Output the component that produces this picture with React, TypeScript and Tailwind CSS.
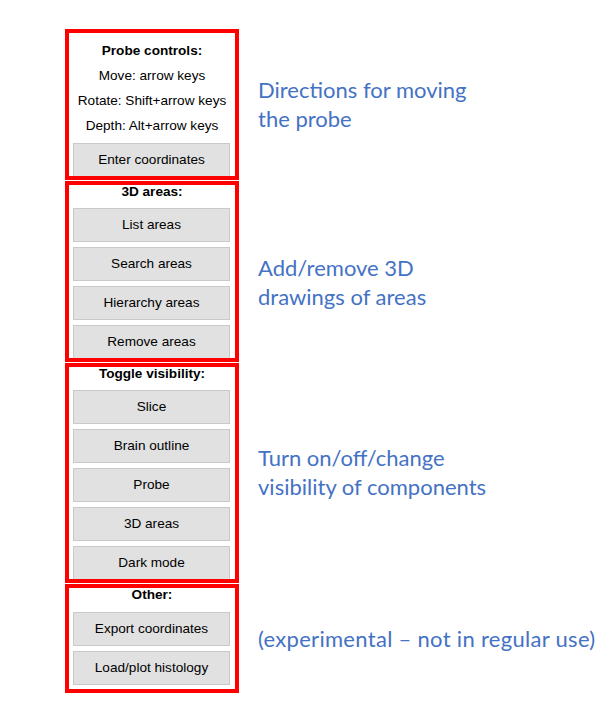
const Btn = ({ label }: { label: string }) => (
    <div className="ml-[4px] w-[157px] h-[34px] shrink-0 flex items-center justify-center bg-[#e1e1e1] border border-[#c9c9c9] text-[13.6px] text-black">
        {label}
    </div>
);

const Heading = ({ text }: { text: string }) => (
    <div className="h-[14px] leading-[14px] text-center font-bold text-[13.6px] text-black">{text}</div>
);

const Note = ({ lines, className = "" }: { lines: string[]; className?: string }) => (
    <div className={`font-['Lato',sans-serif] text-[22px] leading-[29px] text-[#4472c4] ${className}`}>
        {lines.map((l) => (
            <div key={l} className="whitespace-nowrap">{l}</div>
        ))}
    </div>
);

export default function App() {
    return (
        <div className="w-[605px] h-[720px] bg-white font-['Liberation_Sans',Arial,sans-serif] pt-[29px] pl-[65px]">
            <div className="flex flex-col gap-[1px]">
                {/* probe controls */}
                <div className="flex items-center gap-[19px]">
                    <div className="w-[174px] h-[151px] shrink-0 border-4 border-[#ff0000] overflow-hidden flex flex-col">
                        <div className="pt-[5px] text-center text-[13.6px] text-black">
                            <div className="h-[25px] leading-[25px] font-bold">Probe controls:</div>
                            <div className="h-[25px] leading-[25px]">Move: arrow keys</div>
                            <div className="h-[25px] leading-[25px]">Rotate: Shift+arrow keys</div>
                            <div className="h-[25px] leading-[25px]">Depth: Alt+arrow keys</div>
                        </div>
                        <div className="mt-[5px]">
                            <Btn label="Enter coordinates" />
                        </div>
                    </div>
                    <Note lines={["Directions for moving", "the probe"]} className="-mt-[2px]" />
                </div>

                {/* 3D areas */}
                <div className="flex items-center gap-[19px]">
                    <div className="w-[174px] h-[181px] shrink-0 border-4 border-[#ff0000] overflow-hidden flex flex-col">
                        <Heading text="3D areas:" />
                        <div className="mt-[9px] flex flex-col gap-[5px]">
                            <Btn label="List areas" />
                            <Btn label="Search areas" />
                            <Btn label="Hierarchy areas" />
                            <Btn label="Remove areas" />
                        </div>
                    </div>
                    <Note lines={["Add/remove 3D", "drawings of areas"]} className="mt-[20px]" />
                </div>

                {/* visibility */}
                <div className="flex items-center gap-[19px]">
                    <div className="w-[174px] h-[220px] shrink-0 border-4 border-[#ff0000] overflow-hidden flex flex-col">
                        <Heading text="Toggle visibility:" />
                        <div className="mt-[9px] flex flex-col gap-[5px]">
                            <Btn label="Slice" />
                            <Btn label="Brain outline" />
                            <Btn label="Probe" />
                            <Btn label="3D areas" />
                            <Btn label="Dark mode" />
                        </div>
                    </div>
                    <Note lines={["Turn on/off/change", "visibility of components"]} className="-mt-[2px]" />
                </div>

                {/* other */}
                <div className="flex items-center gap-[19px]">
                    <div className="w-[174px] h-[109px] shrink-0 border-4 border-[#ff0000] overflow-hidden flex flex-col">
                        <Heading text="Other:" />
                        <div className="mt-[10px] flex flex-col gap-[5px]">
                            <Btn label="Export coordinates" />
                            <Btn label="Load/plot histology" />
                        </div>
                    </div>
                    <Note lines={["(experimental \u2013 not in regular use)"]} className="tracking-[0.3px]" />
                </div>
            </div>
        </div>
    );
}
